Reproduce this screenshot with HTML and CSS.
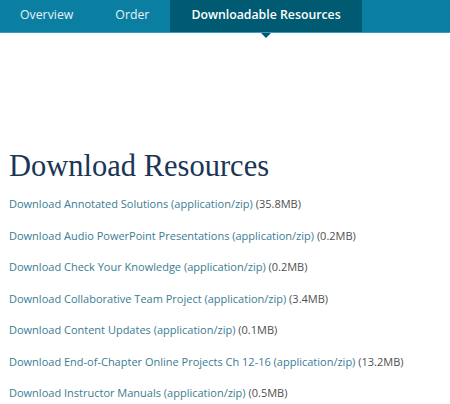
FILE: index.html
```html
<!DOCTYPE html>
<html>
<head>
<meta charset="utf-8">
<link rel="stylesheet" href="styles.css">
</head>
<body>
<nav class="tabs">
  <a class="tab">Overview</a>
  <a class="tab">Order</a>
  <a class="tab active">Downloadable Resources</a>
</nav>
<main class="content">
  <h1 class="title">Download Resources</h1>
  <ul class="list">
    <li><a class="link">Download Annotated Solutions (application/zip)</a> <span class="size">(35.8MB)</span></li>
    <li><a class="link">Download Audio PowerPoint Presentations (application/zip)</a> <span class="size">(0.2MB)</span></li>
    <li><a class="link">Download Check Your Knowledge (application/zip)</a> <span class="size">(0.2MB)</span></li>
    <li><a class="link">Download Collaborative Team Project (application/zip)</a> <span class="size">(3.4MB)</span></li>
    <li><a class="link">Download Content Updates (application/zip)</a> <span class="size">(0.1MB)</span></li>
    <li><a class="link">Download End-of-Chapter Online Projects Ch 12-16 (application/zip)</a> <span class="size">(13.2MB)</span></li>
    <li><a class="link">Download Instructor Manuals (application/zip)</a> <span class="size">(0.5MB)</span></li>
  </ul>
</main>
</body>
</html>
```

FILE: styles.css
```css
html, body { margin: 0; padding: 0; background: #fff; }
body { font-family: "Open Sans", "Liberation Sans", sans-serif; width: 450px; overflow: hidden; }
.tabs {
  display: flex;
  height: 32px;
  background: #0a7fa1;
  border-bottom: 1px solid #3a9cba;
}
.tab {
  display: flex;
  align-items: center;
  flex-shrink: 0;
  white-space: nowrap;
  padding: 0 21px 3px 20px;
  color: #e6f2f6;
  font-size: 12.3px;
  height: 32px;
  box-sizing: border-box;
}
.tab + .tab { padding-left: 21px; }
.tab.active {
  position: relative;
  background: #005a72;
  color: #fff;
  font-weight: 600;
}
.tab.active::after {
  content: "";
  position: absolute;
  left: 50%;
  bottom: -6px;
  margin-left: -5px;
  border-left: 5px solid transparent;
  border-right: 5px solid transparent;
  border-top: 5px solid #005a72;
}
.content { padding: 0 9px; }
.title {
  font-family: "Liberation Serif", "DejaVu Serif", serif;
  font-weight: normal;
  font-size: 30.5px;
  color: #1b3556;
  margin: 114px 0 0;
  line-height: 38px;
}
.list { list-style: none; margin: 3px 0 0; padding: 0; }
.list li { font-size: 11px; line-height: 31.5px; color: #555; }
.link { color: #3a7c93; }
.size { color: #505050; }
```
